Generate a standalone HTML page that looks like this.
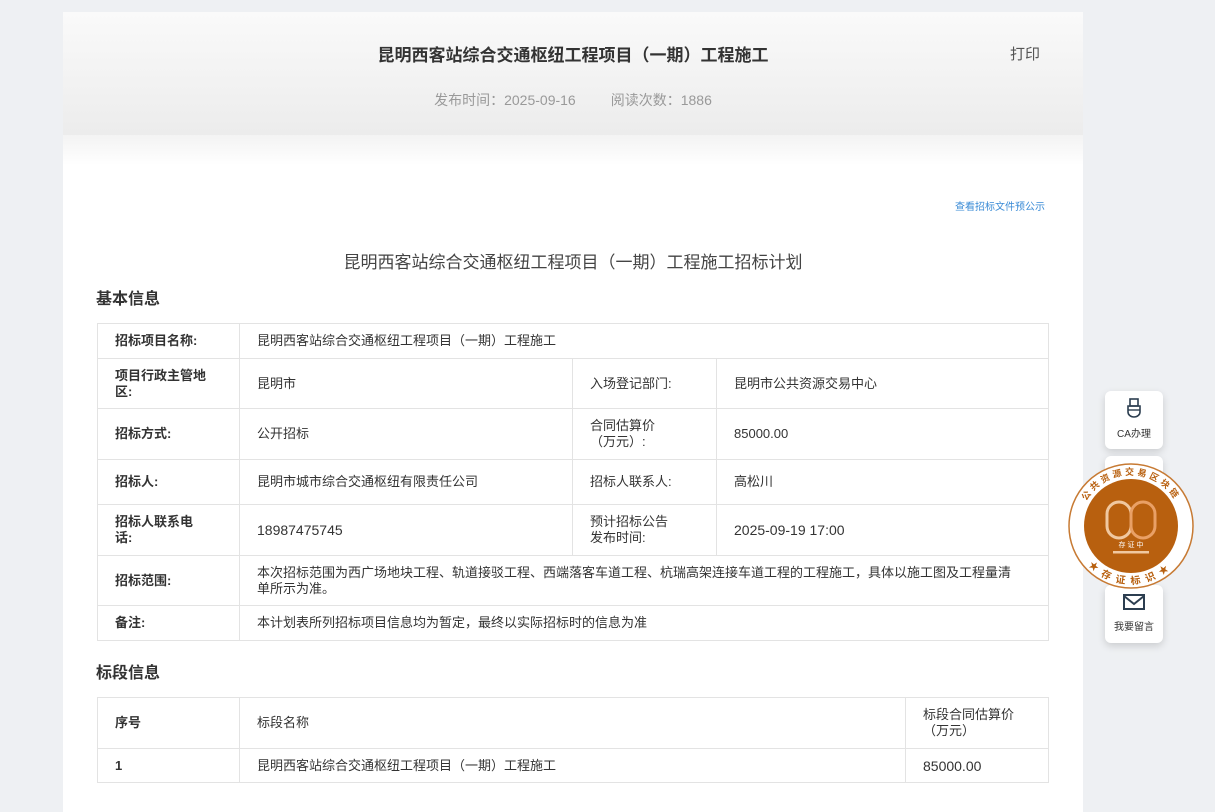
<!DOCTYPE html>
<html><head><meta charset="utf-8"><style>
*{margin:0;padding:0;box-sizing:border-box}
body{width:1215px;height:793px;overflow:hidden;background:#eef0f3;font-family:"Liberation Sans","Noto Sans CJK SC",sans-serif;color:#333;position:relative}
.card{position:absolute;left:63px;top:12px;width:1020px;height:800px;background:#fff}
.hd{height:123px;background:linear-gradient(180deg,#fafafa,#ececec);position:relative}
.hd:after{content:"";position:absolute;left:0;right:0;top:123px;height:30px;background:linear-gradient(#f3f3f3,#fff)}
.t1{position:absolute;left:0;right:0;top:29px;text-align:center;font-size:17px;font-weight:bold;color:#333}
.pr{position:absolute;left:947px;top:31px;font-size:15px;color:#555}
.meta{position:absolute;left:0;right:0;top:78px;text-align:center;font-size:14px;color:#999}
.a{position:absolute;font-size:10px;color:#3a8bd6;left:892px;top:186px}
.t2{position:absolute;left:0;right:0;top:236px;text-align:center;font-size:17px;color:#444}
.h{position:absolute;left:33px;font-size:16px;font-weight:bold;color:#333}
table{position:absolute;left:34px;border-collapse:collapse;font-size:13px}
td{border:1px solid #e3e3e3;padding:0 22px 0 17px;color:#333;line-height:16px}
td.l{font-weight:bold;padding-right:32px}
td.m{padding-right:36px}
.fl{position:absolute;left:1105px;width:58px;background:#fff;border-radius:6px;box-shadow:0 3px 8px rgba(0,0,0,.15);text-align:center;font-size:10px;color:#333}
</style></head><body>
<div class="card">
<div class="hd"><div class="t1">昆明西客站综合交通枢纽工程项目（一期）工程施工</div><div class="pr">打印</div>
<div class="meta">发布时间：2025-09-16 &nbsp; &nbsp; &nbsp; &nbsp; 阅读次数：1886</div></div>
<div class="a">查看招标文件预公示</div>
<div class="t2">昆明西客站综合交通枢纽工程项目（一期）工程施工招标计划</div>
<div class="h" style="top:273px">基本信息</div>
<table style="top:311px;width:952px">
<colgroup><col style="width:142px"><col style="width:333px"><col style="width:144px"><col></colgroup>
<tr style="height:35px"><td class="l">招标项目名称:</td><td colspan="3">昆明西客站综合交通枢纽工程项目（一期）工程施工</td></tr>
<tr style="height:50px"><td class="l">项目行政主管地区:</td><td>昆明市</td><td class="m">入场登记部门:</td><td>昆明市公共资源交易中心</td></tr>
<tr style="height:51px"><td class="l">招标方式:</td><td>公开招标</td><td class="m">合同估算价（万元）:</td><td>85000.00</td></tr>
<tr style="height:45px"><td class="l">招标人:</td><td>昆明市城市综合交通枢纽有限责任公司</td><td class="m">招标人联系人:</td><td>高松川</td></tr>
<tr style="height:51px"><td class="l">招标人联系电话:</td><td style="font-size:14px">18987475745</td><td class="m">预计招标公告发布时间:</td><td style="font-size:14px">2025-09-19 17:00</td></tr>
<tr style="height:50px"><td class="l">招标范围:</td><td colspan="3" style="padding-right:26px">本次招标范围为西广场地块工程、轨道接驳工程、西端落客车道工程、杭瑞高架连接车道工程的工程施工，具体以施工图及工程量清单所示为准。</td></tr>
<tr style="height:35px"><td class="l">备注:</td><td colspan="3">本计划表所列招标项目信息均为暂定，最终以实际招标时的信息为准</td></tr>
</table>
<div class="h" style="top:647px">标段信息</div>
<table style="top:685px;width:952px">
<colgroup><col style="width:142px"><col style="width:666px"><col></colgroup>
<tr style="height:51px"><td class="l">序号</td><td>标段名称</td><td>标段合同估算价（万元）</td></tr>
<tr style="height:34px"><td class="l">1</td><td>昆明西客站综合交通枢纽工程项目（一期）工程施工</td><td style="font-size:14px">85000.00</td></tr>
</table>
</div>
<div class="fl" style="top:391px;height:58px"><svg width="20" height="22" viewBox="0 0 20 22" style="margin-top:6px"><rect x="6" y="2" width="8" height="7" fill="none" stroke="#2c3e50" stroke-width="1.6"/><path d="M4 9h12v6a6 5 0 0 1-12 0z" fill="none" stroke="#2c3e50" stroke-width="1.6"/><path d="M4 13h12" stroke="#2c3e50" stroke-width="1.4"/></svg><div style="margin-top:3px">CA办理</div></div>
<div class="fl" style="top:456px;height:30px"></div>
<div class="fl" style="top:585px;height:58px"><svg width="24" height="18" viewBox="0 0 24 18" style="margin-top:8px"><rect x="2" y="2" width="20" height="14" fill="none" stroke="#2c3e50" stroke-width="2"/><path d="M2 3l10 8 10-8" fill="none" stroke="#2c3e50" stroke-width="2"/></svg><div style="margin-top:4px">我要留言</div></div>
<svg style="position:absolute;left:1067px;top:462px" width="128" height="128" viewBox="0 0 128 128">
<defs><path id="tp" d="M13 64a51 51 0 0 1 102 0"/><path id="bp" d="M6 64a58 58 0 0 0 116 0"/></defs>
<circle cx="64" cy="64" r="62" fill="#fff" stroke="#c77a33" stroke-width="1.5"/>
<circle cx="64" cy="64" r="47" fill="#b8600f"/>
<rect x="40" y="40" width="24" height="36" rx="12" fill="none" stroke="#f0c8a0" stroke-width="3"/>
<rect x="64" y="40" width="24" height="36" rx="12" fill="none" stroke="#e9a066" stroke-width="3"/>
<rect x="46" y="89" width="36" height="2.5" fill="#f0c8a0"/>
<text font-size="9" fill="#b8600f" font-weight="bold" letter-spacing="3"><textPath href="#tp" startOffset="50%" text-anchor="middle">公共资源交易区块链</textPath></text>
<text font-size="10" fill="#b8600f" font-weight="bold" letter-spacing="6"><textPath href="#bp" startOffset="50%" text-anchor="middle">★存证标识★</textPath></text>
<text x="64" y="85" font-size="7" fill="#fff" text-anchor="middle">存 证 中</text>
</svg>
</body></html>
